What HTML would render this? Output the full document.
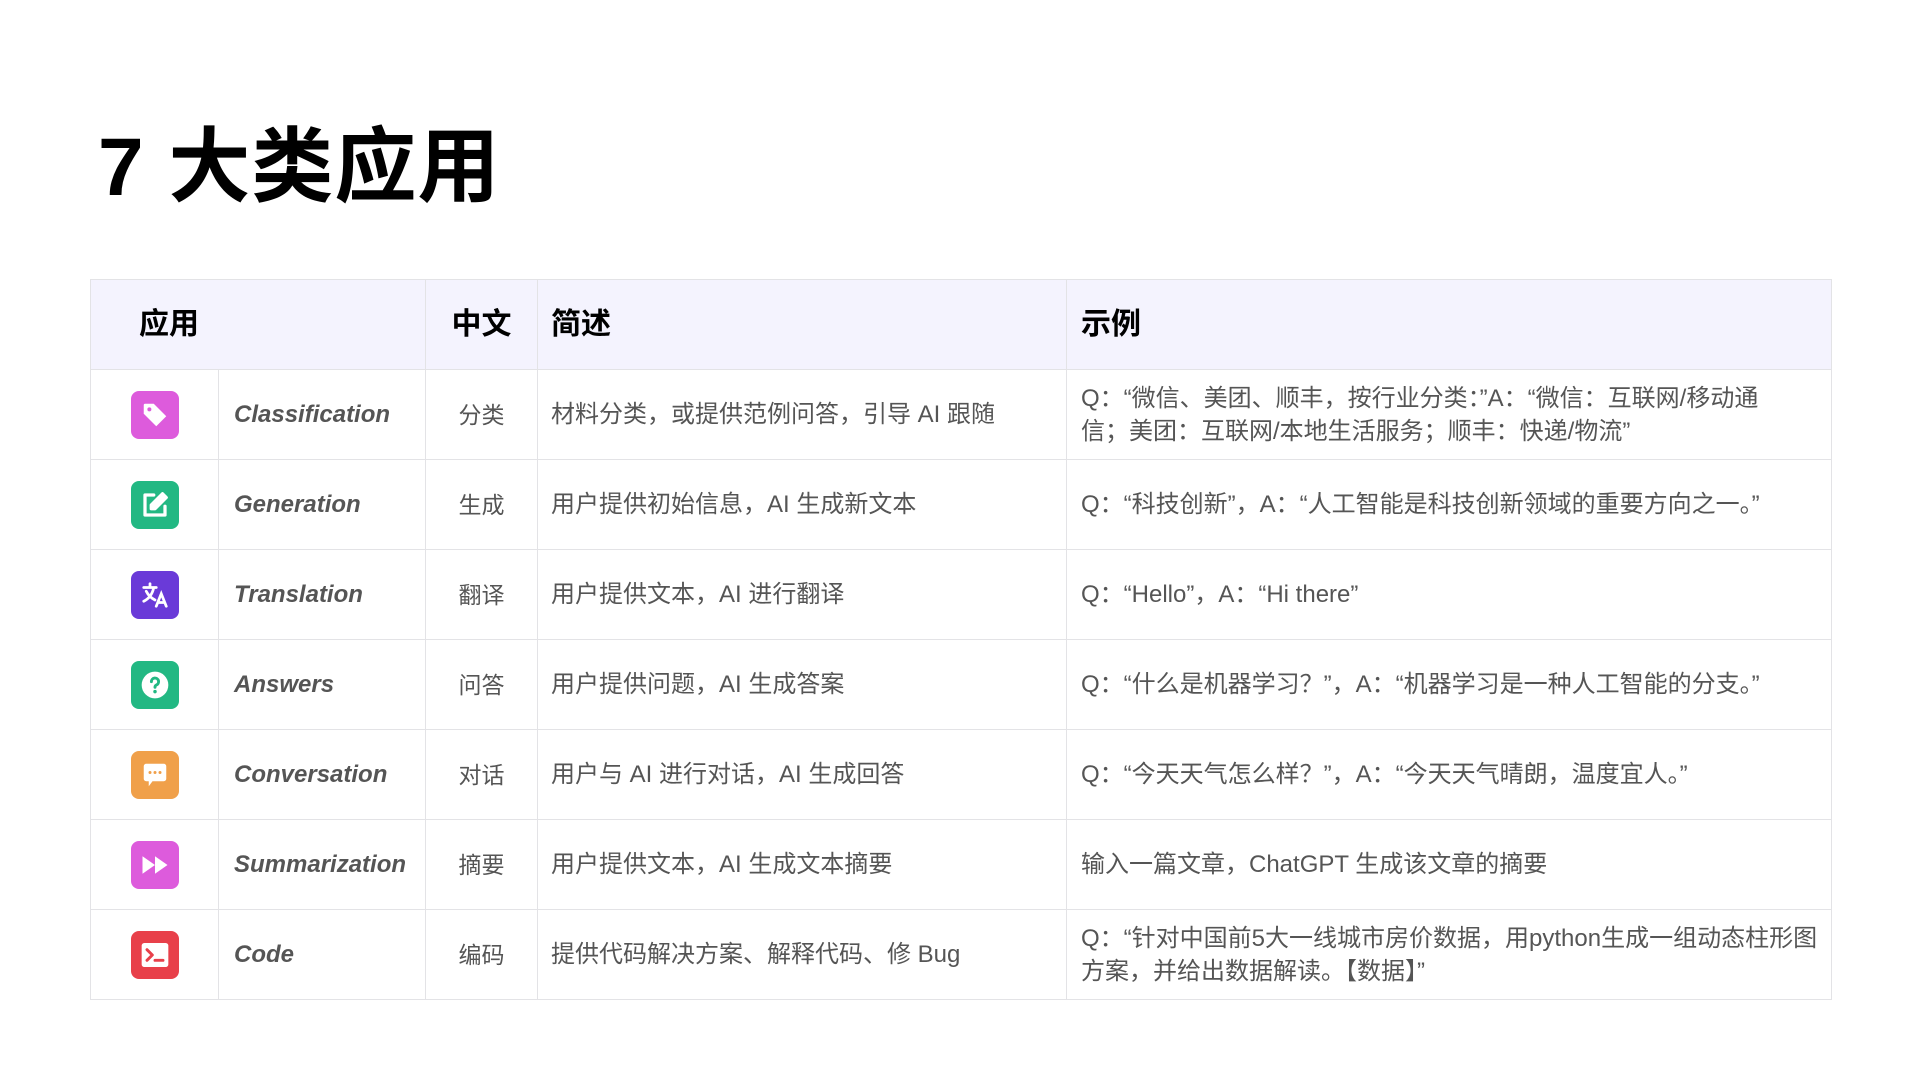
<!DOCTYPE html>
<html><head><meta charset="utf-8"><style>
body{margin:0;width:1920px;height:1080px;background:#fff;font-family:"Liberation Sans","Noto Sans CJK SC",sans-serif;position:relative;overflow:hidden}
h1{position:absolute;left:98px;top:116px;margin:0;font-size:82px;font-weight:bold;color:#000;line-height:104px;letter-spacing:1px}
table{position:absolute;left:90px;top:279px;border-collapse:collapse;table-layout:fixed}
td,th{border:1.5px solid #e3e3e6;height:89px;padding:0;color:#555;font-size:24px;vertical-align:middle;line-height:30px}
th{background:#f4f3fe;color:#000;font-size:30px;font-weight:bold;text-align:left}
.ic{text-align:center}
.ic div{width:48px;height:48px;border-radius:8px;margin:0 auto;display:flex;align-items:center;justify-content:center}
.en{font-style:italic;font-weight:bold;font-size:24px;padding-left:15px}
.zh{text-align:center;font-size:23px}
.d{padding-left:13px}
.e{padding-left:14px;line-height:33px;padding-right:12px}
</style></head><body>
<h1>7 大类应用</h1>
<table>
<colgroup><col style="width:128px"><col style="width:207px"><col style="width:112px"><col style="width:529px"><col style="width:765px"></colgroup>
<tr><th colspan="2" style="padding-left:48px">应用</th><th style="text-align:center">中文</th><th style="padding-left:13px">简述</th><th style="padding-left:14px">示例</th></tr>
<tr><td class="ic"><div style="background:#dd5bdc"><svg width="30" height="30" viewBox="0 0 24 24"><path d="M3 4a1 1 0 0 1 1-1h7l10 10-8 8L3 11z" fill="#fff"/><circle cx="7.5" cy="7.5" r="1.6" fill="#dd5bdc"/></svg></div></td><td class="en">Classification</td><td class="zh">分类</td><td class="d">材料分类，或提供范例问答，引导 AI 跟随</td><td class="e" style="padding-right:50px">Q：“微信、美团、顺丰，按行业分类：”A：“微信：互联网/移动通信；美团：互联网/本地生活服务；顺丰：快递/物流”</td></tr>
<tr><td class="ic"><div style="background:#22b883"><svg width="30" height="30" viewBox="0 0 24 24" fill="none" stroke="#fff" stroke-width="2.6" stroke-linecap="round" stroke-linejoin="round"><path d="M11 4H4v16h16v-7"/><path d="M18 3l3 3-9 9H9v-3z" fill="#fff"/></svg></div></td><td class="en">Generation</td><td class="zh">生成</td><td class="d">用户提供初始信息，AI 生成新文本</td><td class="e">Q：“科技创新”，A：“人工智能是科技创新领域的重要方向之一。”</td></tr>
<tr><td class="ic"><div style="background:#6a3ad8"><svg width="30" height="30" viewBox="0 0 24 24" fill="none" stroke="#fff" stroke-width="2.2" stroke-linecap="round"><path d="M3 6h10M8 3v3M5 9c2 4 5 6 7 7M11 6c-1 5-4 9-8 11"/><path d="M13 21l4-10 4 10M14.5 18h5"/></svg></div></td><td class="en">Translation</td><td class="zh">翻译</td><td class="d">用户提供文本，AI 进行翻译</td><td class="e">Q：“Hello”，A：“Hi there”</td></tr>
<tr><td class="ic"><div style="background:#22b883"><svg width="32" height="32" viewBox="0 0 24 24"><circle cx="12" cy="12" r="10" fill="#fff"/><path d="M9.3 9.5a2.7 2.7 0 1 1 3.7 2.5c-.8.4-1 .9-1 1.7" fill="none" stroke="#22b883" stroke-width="2.2" stroke-linecap="round"/><circle cx="12" cy="17" r="1.3" fill="#22b883"/></svg></div></td><td class="en">Answers</td><td class="zh">问答</td><td class="d">用户提供问题，AI 生成答案</td><td class="e">Q：“什么是机器学习？”，A：“机器学习是一种人工智能的分支。”</td></tr>
<tr><td class="ic"><div style="background:#f0a04a"><svg width="30" height="30" viewBox="0 0 24 24"><path d="M3 5a2 2 0 0 1 2-2h14a2 2 0 0 1 2 2v10a2 2 0 0 1-2 2h-9l-3 4v-4H5a2 2 0 0 1-2-2z" fill="#fff"/><circle cx="8" cy="10" r="1.2" fill="#f0a04a"/><circle cx="12" cy="10" r="1.2" fill="#f0a04a"/><circle cx="16" cy="10" r="1.2" fill="#f0a04a"/></svg></div></td><td class="en">Conversation</td><td class="zh">对话</td><td class="d">用户与 AI 进行对话，AI 生成回答</td><td class="e">Q：“今天天气怎么样？”，A：“今天天气晴朗，温度宜人。”</td></tr>
<tr><td class="ic"><div style="background:#dd5bdc"><svg width="30" height="30" viewBox="0 0 24 24"><path d="M2 5l10 7-10 7zM12 5l10 7-10 7z" fill="#fff"/></svg></div></td><td class="en">Summarization</td><td class="zh">摘要</td><td class="d">用户提供文本，AI 生成文本摘要</td><td class="e">输入一篇文章，ChatGPT 生成该文章的摘要</td></tr>
<tr><td class="ic"><div style="background:#e8404a"><svg width="32" height="32" viewBox="0 0 24 24"><rect x="2" y="3" width="20" height="18" rx="2" fill="#fff"/><path d="M6 8l4 4-4 4" fill="none" stroke="#e8404a" stroke-width="2.2" stroke-linecap="round" stroke-linejoin="round"/><path d="M12 16h6" stroke="#e8404a" stroke-width="2.2" stroke-linecap="round"/></svg></div></td><td class="en">Code</td><td class="zh">编码</td><td class="d">提供代码解决方案、解释代码、修 Bug</td><td class="e">Q：“针对中国前5大一线城市房价数据，用python生成一组动态柱形图方案，并给出数据解读。【数据】”</td></tr>
</table>
</body></html>
